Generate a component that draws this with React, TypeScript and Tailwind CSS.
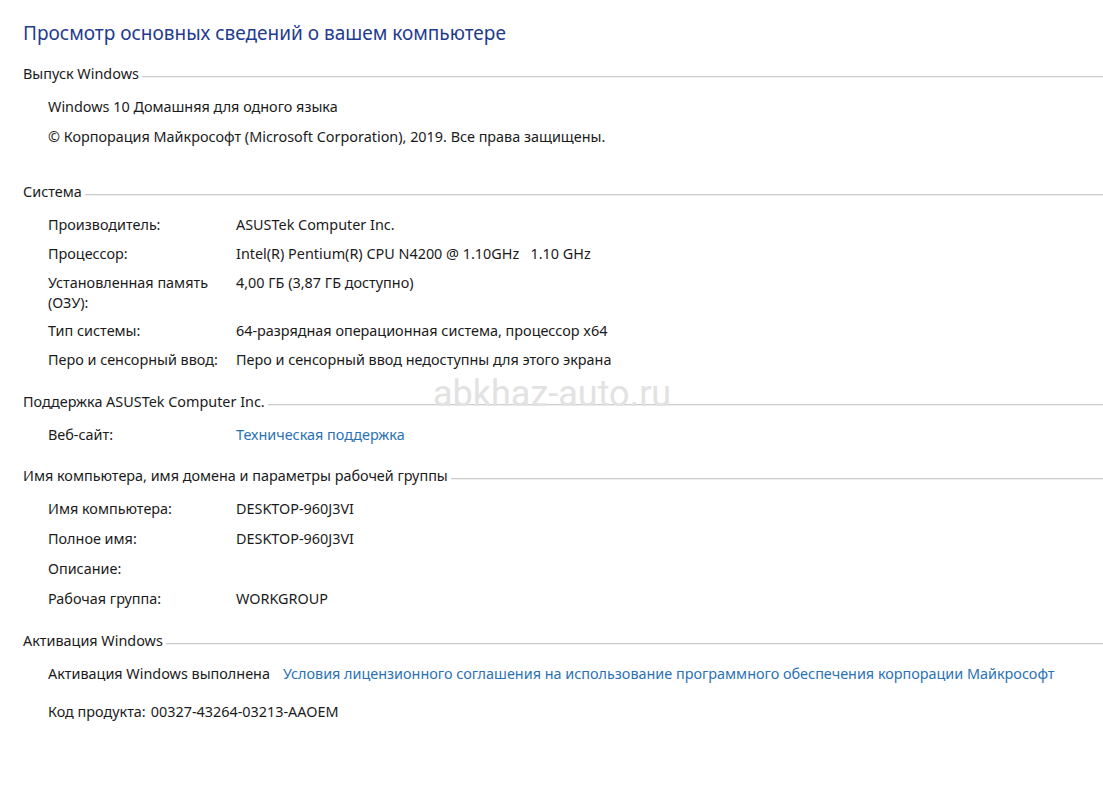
import React from 'react';

interface Row {
    label: string;
    value?: string;
    link?: boolean;
}

function Section({ title, className = '' }: { title: string; className?: string }) {
    return (
        <div className={`flex items-center pl-[23px] leading-[20px] ${className}`}>
            <span className="whitespace-nowrap">{title}</span>
            <div className="flex-1 ml-[3px] mt-[5px] h-[2px] border-t border-[#cdcdcd] border-b-[#f0f0f0] border-b" />
        </div>
    );
}

function Rows({ rows, gap, className = '' }: { rows: Row[]; gap: string; className?: string }) {
    return (
        <div className={`flex flex-col pl-[48px] ${gap} ${className}`}>
            {rows.map((r) => (
                <div key={r.label} className="flex leading-[20px] min-h-[20px]">
                    <div className="w-[188px] shrink-0 pr-2 leading-[19.5px]">{r.label}</div>
                    <div className={`whitespace-pre ${r.link ? 'text-[#2a72b5]' : ''}`}>{r.value}</div>
                </div>
            ))}
        </div>
    );
}

export default function App() {
    return (
        <div
            className="relative w-[1103px] h-[786px] bg-white text-[#1b1b1b] text-[14.4px] overflow-hidden"
            style={{ fontFamily: '"Noto Sans", "Open Sans", sans-serif' }}
        >
            <h1 className="pt-[19px] pl-[23px] text-[19px] leading-[28px] text-[#1f3c8e]">
                Просмотр основных сведений о вашем компьютере
            </h1>

            <Section title="Выпуск Windows" className="mt-[17px]" />
            <div className="flex flex-col gap-[10px] pl-[48px] mt-[13px] leading-[20px]">
                <div>Windows 10 Домашняя для одного языка</div>
                <div>© Корпорация Майкрософт (Microsoft Corporation), 2019. Все права защищены.</div>
            </div>

            <Section title="Система" className="mt-[35px]" />
            <Rows
                className="mt-[13px]"
                gap="gap-[9px]"
                rows={[
                    { label: 'Производитель:', value: 'ASUSTek Computer Inc.' },
                    { label: 'Процессор:', value: 'Intel(R) Pentium(R) CPU N4200 @ 1.10GHz   1.10 GHz' },
                    { label: 'Установленная память (ОЗУ):', value: '4,00 ГБ (3,87 ГБ доступно)' },
                    { label: 'Тип системы:', value: '64-разрядная операционная система, процессор x64' },
                    { label: 'Перо и сенсорный ввод:', value: 'Перо и сенсорный ввод недоступны для этого экрана' },
                ]}
            />

            <Section title="Поддержка ASUSTek Computer Inc." className="mt-[22px]" />
            <Rows
                className="mt-[13px]"
                gap="gap-[10px]"
                rows={[{ label: 'Веб-сайт:', value: 'Техническая поддержка', link: true }]}
            />

            <Section title="Имя компьютера, имя домена и параметры рабочей группы" className="mt-[21px]" />
            <Rows
                className="mt-[13px]"
                gap="gap-[10px]"
                rows={[
                    { label: 'Имя компьютера:', value: 'DESKTOP-960J3VI' },
                    { label: 'Полное имя:', value: 'DESKTOP-960J3VI' },
                    { label: 'Описание:', value: '' },
                    { label: 'Рабочая группа:', value: 'WORKGROUP' },
                ]}
            />

            <Section title="Активация Windows" className="mt-[22px]" />
            <div className="pl-[48px] mt-[13px] leading-[20px] flex gap-[13px] whitespace-nowrap">
                <span>Активация Windows выполнена</span>
                <span className="text-[#2a72b5]">
                    Условия лицензионного соглашения на использование программного обеспечения корпорации Майкрософт
                </span>
            </div>
            <div className="pl-[48px] mt-[18px] leading-[20px] whitespace-nowrap flex gap-[5px]">
                <span>Код продукта:</span>
                <span>00327-43264-03213-AAOEM</span>
            </div>

            <div
                className="absolute left-[433px] top-[373px] text-[36px] leading-[42px] text-[#e2e2e2] pointer-events-none"
                style={{ fontFamily: 'Roboto, sans-serif' }}
            >
                abkhaz-auto.ru
            </div>
        </div>
    );
}
